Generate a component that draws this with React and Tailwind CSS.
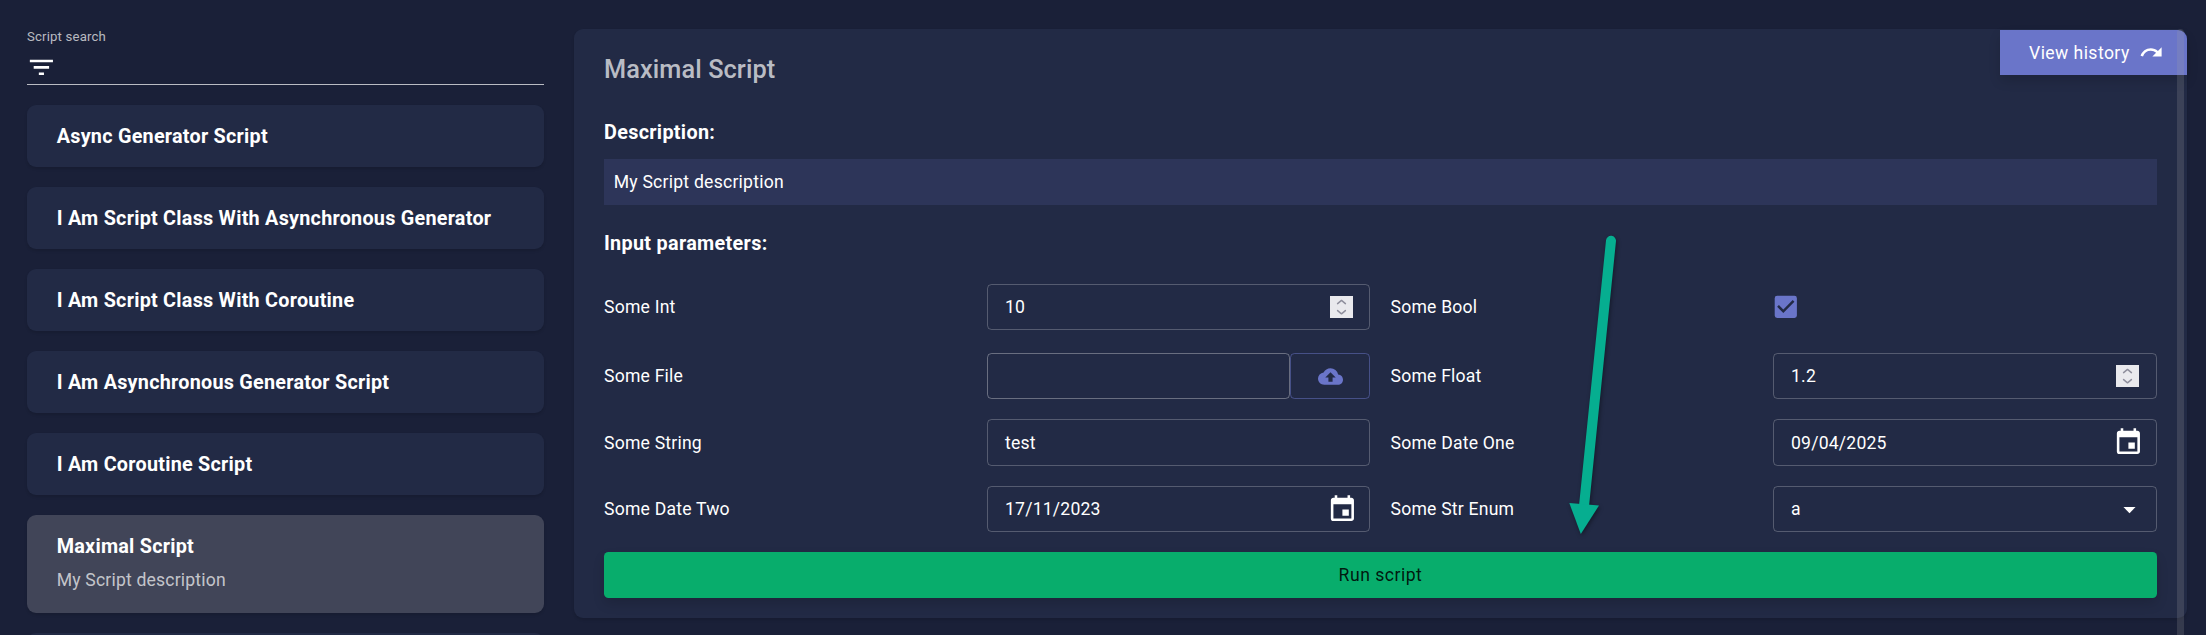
import {
  MdArrowDropDown,
  MdBackup,
  MdCheckBox,
  MdEvent,
  MdFilterList,
  MdRedo,
} from "react-icons/md";

const scripts = [
  { title: "Async Generator Script" },
  { title: "I Am Script Class With Asynchronous Generator" },
  { title: "I Am Script Class With Coroutine" },
  { title: "I Am Asynchronous Generator Script" },
  { title: "I Am Coroutine Script" },
  { title: "Maximal Script", description: "My Script description", selected: true },
];

function ScriptCard({ title, description, selected }) {
  return (
    <div
      className={
        "flex shrink-0 flex-col rounded-[9px] pl-[29.7px] shadow-[0_2px_3px_rgba(0,0,0,0.12)] " +
        (selected ? "h-[98px] bg-[#414558] pt-[17px]" : "h-[62px] bg-[#222a45] pt-[17px]")
      }
    >
      <div className="text-[19.8px] leading-[30px] font-bold tracking-[0.25px] text-white">{title}</div>
      {description && (
        <div className="mt-[5px] text-[17.6px] leading-[26px] tracking-[0.18px] text-white/70">{description}</div>
      )}
    </div>
  );
}

function Spinner() {
  return (
    <svg viewBox="0 0 23 22" className="h-[22px] w-[23px] bg-[#e9e9ed]" fill="none" stroke="#8f8f9d" strokeWidth="1.5" strokeLinecap="round" strokeLinejoin="round">
      <path d="M7.6 7.6 L11.5 4.4 L15.4 7.6" />
      <path d="M7.6 14.6 L11.5 17.8 L15.4 14.6" />
    </svg>
  );
}

function Field({ value, children, className = "" }) {
  return (
    <div
      className={
        "flex h-full items-center justify-between rounded-[4.5px] border border-white/23 pl-[17px] " + className
      }
    >
      <span>{value}</span>
      {children}
    </div>
  );
}

function FileField() {
  return (
    <div className="flex h-full">
      <div className="w-[303px] rounded-[4.5px] border border-white/32" />
      <div className="flex w-[80px] items-center justify-center rounded-[4.5px] border border-[#6a75c9]/50">
        <MdBackup className="size-[25px] text-[#6a75c9]" />
      </div>
    </div>
  );
}

function Row({ labels, left, right, className }) {
  return (
    <div className={"grid grid-cols-[383px_383px_403px_384px] items-center " + className}>
      <div>{labels[0]}</div>
      {left}
      <div className="pl-[20.5px]">{labels[1]}</div>
      {right}
    </div>
  );
}

export default function App() {
  return (
    <div className="relative flex h-[635px] w-[2206px] overflow-hidden bg-[#1a2038] font-[Roboto,sans-serif] text-white">
      <aside className="ml-[27px] flex w-[517px] shrink-0 flex-col">
        <div className="mt-[28px] text-[13.2px] leading-[18px] tracking-[0.16px] text-white/70">Script search</div>
        <div className="mb-[20px] flex h-[39px] shrink-0 items-end border-b border-[#babcc3] pb-[1.3px]">
          <MdFilterList className="-ml-[0.6px] size-[30.8px]" />
        </div>
        <div className="flex flex-col gap-[20px]">
          {scripts.map((s) => (
            <ScriptCard key={s.title} {...s} />
          ))}
          <div className="h-[62px] shrink-0 rounded-[9px] bg-[#222a45]" />
        </div>
      </aside>

      <main className="mt-[29px] ml-[30px] h-[589px] w-[1613px] rounded-[9px] bg-[#222a45] px-[30px] shadow-[0_2px_3px_rgba(0,0,0,0.12)]">
        <h1 className="pt-[24px] text-[25.3px] leading-[34px] font-medium tracking-[0.1px] text-white/70">Maximal Script</h1>
        <h2 className="mt-[31px] text-[19.8px] leading-[30px] font-bold tracking-[0.32px]">Description:</h2>
        <div className="mt-[11px] h-[46px] bg-[#2d3559] pt-[10px] pl-[9.7px] text-[17.6px] leading-[26px] tracking-[0.23px]">
          My Script description
        </div>
        <h2 className="mt-[24px] text-[19.8px] leading-[30px] font-bold tracking-[0.32px]">Input parameters:</h2>

        <div className="mt-[25px] flex flex-col text-[17.6px] leading-[26px] tracking-[0.21px]">
          <Row
            className="h-[46px]"
            labels={["Some Int", "Some Bool"]}
            left={<Field value="10" className="pr-[16px]"><Spinner /></Field>}
            right={<MdCheckBox className="-ml-[2px] size-[29.6px] text-[#6a75c9]" />}
          />
          <Row
            className="mt-[23px] h-[46px]"
            labels={["Some File", "Some Float"]}
            left={<FileField />}
            right={<Field value="1.2" className="pr-[17px]"><Spinner /></Field>}
          />
          <Row
            className="mt-[20px] h-[47px]"
            labels={["Some String", "Some Date One"]}
            left={<Field value="test" />}
            right={<Field value="09/04/2025" className="pr-[12px]"><MdEvent className="size-[30.8px]" /></Field>}
          />
          <Row
            className="mt-[20px] h-[46px]"
            labels={["Some Date Two", "Some Str Enum"]}
            left={<Field value="17/11/2023" className="pr-[11px]"><MdEvent className="size-[30.8px]" /></Field>}
            right={<Field value="a" className="pr-[12px]"><MdArrowDropDown className="size-[29px]" /></Field>}
          />
        </div>

        <button className="mt-[20px] flex h-[46px] w-full items-center justify-center rounded-[4.5px] bg-[#08ad6c] text-[17.6px] tracking-[0.5px] text-black/87 shadow-[0_6px_12px_rgba(0,0,0,0.14)]">
          Run script
        </button>
      </main>

      <button className="absolute top-[30px] left-[2000px] flex h-[45px] w-[187px] items-center rounded-tr-[9px] bg-[#6a75c9] pl-[29px] text-[17.6px] leading-[26px] tracking-[0.43px] shadow-[0_6px_12px_rgba(0,0,0,0.14)]">
        <span className="pt-[1px]">View history</span>
        <MdRedo className="ml-[9px] size-[24.7px]" />
      </button>

      <div className="absolute top-[29px] left-[2177px] h-[620px] w-[7px] rounded-t-[4px] bg-[#a4a4a4]/20" />

      <svg className="absolute top-[230px] left-[1560px] h-[320px] w-[70px] drop-shadow-[1px_2px_2px_rgba(0,0,0,0.4)]" viewBox="1560 230 70 320">
        <path d="M1611 240.8 L1584 506" stroke="#06ae90" strokeWidth="10" strokeLinecap="round" />
        <path d="M1569.3 503 L1599 505.4 L1580.8 534 Z" fill="#06ae90" />
      </svg>
    </div>
  );
}
